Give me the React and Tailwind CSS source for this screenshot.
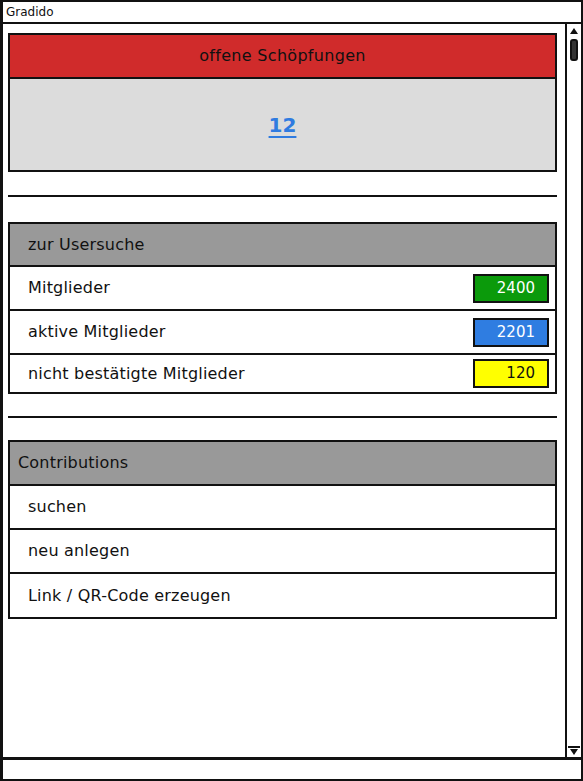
import React from "react";

const font = { fontFamily: '"DejaVu Sans", "Noto Sans", sans-serif' };

function Row({ label, badge, bg, color, h = "h-[46px]" }) {
  return (
    <div className={`${h} border-2 border-[#111] -mt-[2px] flex items-center justify-between pl-[18px] pr-[6px] bg-white`}>
      <span className="text-[16px] tracking-[0.2px] text-[#111]">{label}</span>
      {badge && (
        <span
          className={`w-[76px] h-[29px] border-2 border-[#111] flex items-center justify-end pr-[12px] text-[15px] ${bg} ${color}`}
        >
          {badge}
        </span>
      )}
    </div>
  );
}

export default function App() {
  return (
    <div className="w-[583px] h-[781px] bg-white flex flex-col text-[#111]" style={font}>
      <div className="h-[24px] border-2 border-[#111] border-l-[3px] flex items-center pl-[3px] text-[12px] shrink-0">
        Gradido
      </div>
      <div className="flex-1 min-h-0 flex border-l-[3px] border-r-2 border-[#111]">
        <div className="flex-1 pl-[5px] pr-[8px] pt-[9px]">
          <div className="border-2 border-[#111]">
            <div className="h-[44px] bg-[#d02b2b] border-b-2 border-[#111] flex items-center justify-center text-[16px] tracking-[0.3px]">
              offene Schöpfungen
            </div>
            <div className="h-[91px] bg-[#dcdcdc] flex items-center justify-center">
              <span className="text-[20px] font-bold text-[#2f7be0] underline underline-offset-4">12</span>
            </div>
          </div>
          <div className="h-[2px] bg-[#111] mt-[23px]" />
          <div className="mt-[25px]">
            <div className="h-[45px] border-2 border-[#111] bg-[#999999] flex items-center pl-[18px] text-[16px] tracking-[0.2px]">
              zur Usersuche
            </div>
            <Row label="Mitglieder" badge="2400" bg="bg-[#0b9a0b]" color="text-white" />
            <Row label="aktive Mitglieder" badge="2201" bg="bg-[#2f7de1]" color="text-white" />
            <Row label="nicht bestätigte Mitglieder" badge="120" bg="bg-[#ffff00]" color="text-[#111]" h="h-[41px]" />
          </div>
          <div className="h-[2px] bg-[#111] mt-[22px]" />
          <div className="mt-[22px]">
            <div className="h-[46px] border-2 border-[#111] bg-[#999999] flex items-center pl-[8px] text-[16px] tracking-[0.2px]">
              Contributions
            </div>
            <Row label="suchen" />
            <Row label="neu anlegen" />
            <Row label="Link / QR-Code erzeugen" h="h-[47px]" />
          </div>
        </div>
        <div className="w-[16px] border-l-2 border-[#111] flex flex-col items-center justify-between pb-[1px] pt-[2px]">
          <div className="flex flex-col items-center">
            <div className="w-[12px] h-[10px] flex items-center justify-center">
              <div className="w-0 h-0 border-l-[4px] border-r-[4px] border-b-[6px] border-l-transparent border-r-transparent border-b-[#111]" />
            </div>
            <div className="mt-[3px] w-[8px] h-[22px] rounded-[3px] border-2 border-[#111] bg-[#333]" />
          </div>
          <div className="w-[12px] h-[10px] flex items-center justify-center border-t-2 border-[#111]">
            <div className="w-0 h-0 border-l-[4px] border-r-[4px] border-t-[6px] border-l-transparent border-r-transparent border-t-[#111]" />
          </div>
        </div>
      </div>
      <div className="h-[24px] shrink-0 border-t-[3px] border-b-2 border-l-[3px] border-r-2 border-[#111] bg-white" />
    </div>
  );
}
